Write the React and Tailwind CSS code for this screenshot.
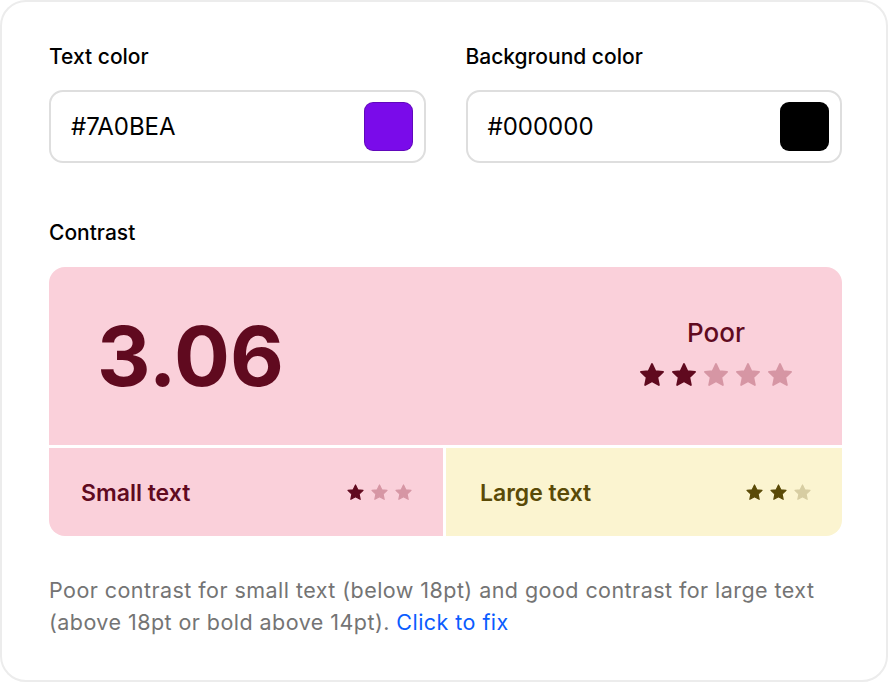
import React from 'react';

const Star = ({ size = 24, color }) => (
  <svg width={size} height={size} viewBox="0 0 24 24" fill={color} stroke={color} strokeWidth="1.5" strokeLinejoin="round">
    <path d="M12 2.5l2.9 6.1 6.6.8-4.9 4.6 1.3 6.6L12 17.3l-5.9 3.3 1.3-6.6-4.9-4.6 6.6-.8z" />
  </svg>
);

const Stars = ({ total, filled, size, on, off, gap }) => (
  <div className={`flex items-center ${gap}`}>
    {Array.from({ length: total }).map((_, i) => (
      <Star key={i} size={size} color={i < filled ? on : off} />
    ))}
  </div>
);

const ColorField = ({ label, value, swatch }) => (
  <div className="flex-1 flex flex-col">
    <label className="text-[21px] font-medium text-black leading-none mb-[23px]">{label}</label>
    <div className="h-[73px] rounded-[14px] border-2 border-[#dedede] flex items-center justify-between pl-[20px] pr-[11px]">
      <span className="text-[24px] text-black">{value}</span>
      <div className="w-[49px] h-[49px] rounded-[9px] border border-black/20" style={{ backgroundColor: swatch }} />
    </div>
  </div>
);

export default function App() {
  return (
    <div className="w-[888px] h-[682px] bg-white" style={{ fontFamily: 'Inter, "Noto Sans", sans-serif' }}>
      <div className="h-[682px] rounded-[26px] border-2 border-[#ececec] pl-[47px] pr-[44px] pt-[44px]">
        {/* Inputs */}
        <div className="flex gap-[40px]">
          <ColorField label="Text color" value="#7A0BEA" swatch="#7A0BEA" />
          <ColorField label="Background color" value="#000000" swatch="#000000" />
        </div>

        {/* Contrast */}
        <div className="mt-[59px] text-[21px] font-medium text-black leading-none">Contrast</div>
        <div className="mt-[24px] rounded-[16px] overflow-hidden flex flex-col gap-[3px]">
          <div className="h-[178px] bg-[#fad0da] flex items-center justify-between pl-[48px] pr-[48px]">
            <span className="text-[83px] font-bold text-[#600a1f] leading-none">3.06</span>
            <div className="flex flex-col items-center gap-[15px] mt-[-4px]">
              <span className="text-[26px] font-medium text-[#600a1f] leading-none">Poor</span>
              <Stars total={5} filled={2} size={28} on="#600a1f" off="#d696a4" gap="gap-[4px]" />
            </div>
          </div>
          <div className="h-[88px] flex gap-[3px]">
            <div className="flex-1 bg-[#fad0da] flex items-center justify-between pl-[32px] pr-[30px]">
              <span className="text-[23px] font-semibold text-[#600a1f] mt-[2px]">Small text</span>
              <Stars total={3} filled={1} size={19} on="#600a1f" off="#d696a4" gap="gap-[5px]" />
            </div>
            <div className="flex-1 bg-[#fbf4d0] flex items-center justify-between pl-[34px] pr-[30px]">
              <span className="text-[23px] font-semibold text-[#5a4a07] mt-[2px]">Large text</span>
              <Stars total={3} filled={2} size={19} on="#5a4a07" off="#d7cda2" gap="gap-[5px]" />
            </div>
          </div>
        </div>

        <p className="mt-[38px] text-[21.5px] tracking-[0.45px] leading-[32px] text-[#747474]">
          Poor contrast for small text (below 18pt) and good contrast for large text (above 18pt or bold above 14pt).{' '}
          <span className="text-[#0a5cff]">Click to fix</span>
        </p>
      </div>
    </div>
  );
}
